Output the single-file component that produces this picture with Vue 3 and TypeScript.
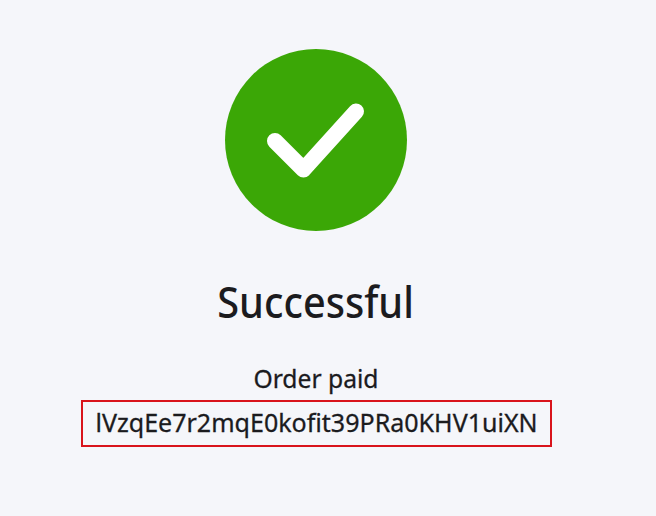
<script setup lang="ts">
const orderId: string = 'lVzqEe7r2mqE0kofit39PRa0KHV1uiXN'
</script>

<template>
  <main class="result">
    <svg class="icon" viewBox="0 0 184 184" aria-hidden="true">
      <circle cx="92" cy="92" r="91" fill="#3ba706" />
      <path d="M51 93 L79.500 121.500 L132 63.500" fill="none" stroke="#fff" stroke-width="16" stroke-linecap="round" stroke-linejoin="round" />
    </svg>
    <h1 class="title"><span class="fit">Successful</span></h1>
    <p class="label"><span class="fit">Order paid</span></p>
    <p class="order"><span class="fit">{{ orderId }}</span></p>
  </main>
</template>

<style>
body {
  background: #f5f6fa;
}
</style>

<style scoped>
.result {
  box-sizing: border-box;
  width: 632px;
  height: 516px;
  padding-top: 48px;
  display: flex;
  flex-direction: column;
  align-items: center;
  color: #1b1b1e;
  font-family: "Noto Sans", "Open Sans", sans-serif;
  white-space: nowrap;
}
.icon {
  width: 184px;
  height: 184px;
  flex: none;
}
.fit {
  display: inline-block;
}
.title {
  margin: 43px 0 0;
  font-size: 43px;
  line-height: 54px;
  font-weight: 500;
}
.title .fit {
  transform: scaleX(0.922);
}
.label {
  margin: 33px 0 0;
  font-size: 26px;
  line-height: 32px;
  -webkit-text-stroke: 0.3px currentColor;
}
.label .fit {
  transform: scaleX(0.948);
}
.order {
  box-sizing: border-box;
  width: 471px;
  height: 47px;
  margin: 6px 0 0;
  padding: 0 0 4px 1px;
  border: 2px solid #d9141c;
  display: flex;
  justify-content: center;
  align-items: center;
  font-size: 26px;
  line-height: 32px;
  -webkit-text-stroke: 0.3px currentColor;
}
.order .fit {
  transform: scaleX(0.963);
}
</style>
